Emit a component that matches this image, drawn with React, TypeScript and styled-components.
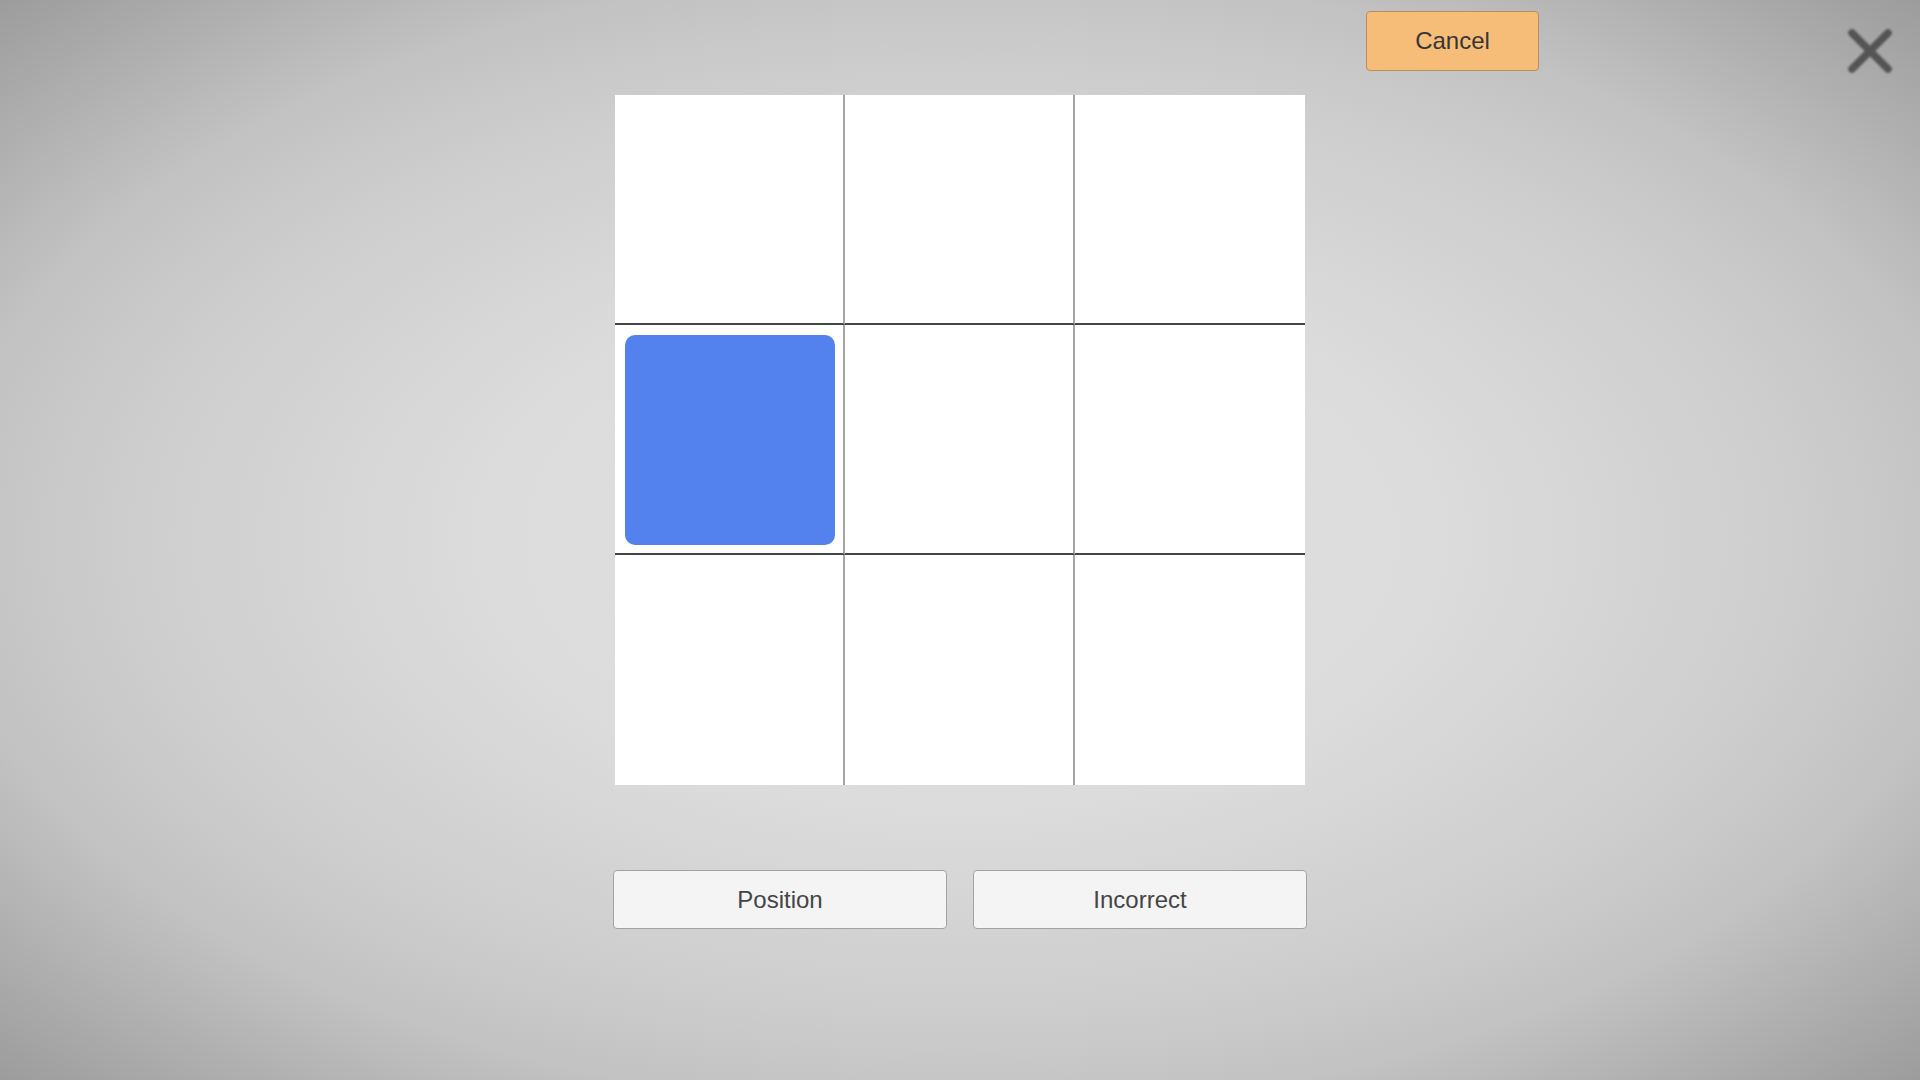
import React from "react";
import styled, { createGlobalStyle } from "styled-components";

const GlobalStyle = createGlobalStyle`
  html, body {
    margin: 0;
    padding: 0;
    width: 100%;
    height: 100%;
    overflow: hidden;
  }
  body {
    font-family: "Liberation Sans", Arial, sans-serif;
  }
  * { box-sizing: border-box; }
`;

const Screen = styled.div`
  width: 1920px;
  height: 1080px;
  display: flex;
  flex-direction: column;
  align-items: center;
  background: radial-gradient(
    ellipse farthest-corner at 50% 50%,
    #e0e0e0 0%,
    #dcdcdc 35%,
    #cdcdcd 62%,
    #c2c2c2 75%,
    #9c9c9c 100%
  );
`;

const TopBar = styled.div`
  width: 100%;
  height: 95px;
  display: flex;
  justify-content: flex-end;
  align-items: flex-start;
  padding: 11px 25px 0 0;
  gap: 306px;
`;

const CancelButton = styled.button`
  width: 173px;
  height: 60px;
  background: #f6bd78;
  border: 1px solid #b98e5e;
  border-radius: 4px;
  color: #363636;
  font-family: "Liberation Sans", Arial, sans-serif;
  font-size: 24px;
  padding: 0;
  cursor: pointer;
`;

const CloseButton = styled.button`
  width: 50px;
  height: 50px;
  margin-top: 15px;
  padding: 0;
  border: none;
  background: transparent;
  display: flex;
  align-items: center;
  justify-content: center;
  cursor: pointer;
  filter: blur(0.9px);
`;

const Board = styled.div`
  width: 690px;
  height: 690px;
  background: #ffffff;
  display: grid;
  grid-template-columns: repeat(3, 230px);
  grid-template-rows: repeat(3, 230px);
`;

const Cell = styled.div<{ $right: boolean; $bottom: boolean }>`
  padding: 10px;
  border-right: ${(p) => (p.$right ? "2px solid #a4a4a4" : "none")};
  border-bottom: ${(p) => (p.$bottom ? "2px solid #444444" : "none")};
  display: flex;
`;

const Tile = styled.div`
  width: 210px;
  height: 210px;
  background: #5382ee;
  border-radius: 10px;
  flex-shrink: 0;
`;

const ActionRow = styled.div`
  margin-top: 85px;
  display: flex;
  gap: 26px;
`;

const ActionButton = styled.button`
  width: 334px;
  height: 59px;
  background: #f4f4f4;
  border: 1px solid #a2a2a2;
  border-radius: 4px;
  color: #454545;
  font-family: "Liberation Sans", Arial, sans-serif;
  font-size: 24px;
  padding: 0;
  cursor: pointer;
`;

const ACTIVE = 3;

export default function App() {
  const cells = Array.from({ length: 9 }, (_, i) => i);
  return (
    <>
      <GlobalStyle />
      <Screen>
        <TopBar>
          <CancelButton>Cancel</CancelButton>
          <CloseButton aria-label="Close">
            <svg width="50" height="50" viewBox="0 0 50 50">
              <path
                d="M7 7 L43 43 M43 7 L7 43"
                stroke="#545454"
                strokeWidth="7.5"
                strokeLinecap="round"
                fill="none"
              />
            </svg>
          </CloseButton>
        </TopBar>
        <Board>
          {cells.map((i) => (
            <Cell key={i} $right={i % 3 !== 2} $bottom={i < 6}>
              {i === ACTIVE && <Tile />}
            </Cell>
          ))}
        </Board>
        <ActionRow>
          <ActionButton>Position</ActionButton>
          <ActionButton>Incorrect</ActionButton>
        </ActionRow>
      </Screen>
    </>
  );
}
